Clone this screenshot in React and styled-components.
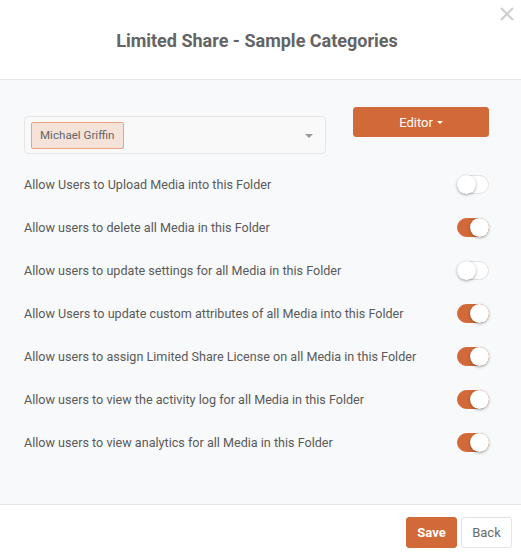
import React from "react";
import styled, { createGlobalStyle } from "styled-components";

const Global = createGlobalStyle`
  html, body { margin: 0; padding: 0; background: #fff; }
  body { font-family: Roboto, "Liberation Sans", Arial, sans-serif; }
  * { box-sizing: border-box; }
`;

const Modal = styled.div`
  width: 521px;
  height: 557px;
  display: flex;
  flex-direction: column;
  background: #fff;
  position: relative;
`;

const Header = styled.div`
  height: 80px;
  border-bottom: 1px solid #e6e6e6;
  display: flex;
  align-items: center;
  justify-content: center;
  padding-right: 7px;
  flex-shrink: 0;
`;

const Title = styled.h2`
  margin: 0;
  padding-top: 2px;
  font-size: 18px;
  font-weight: 700;
  color: #646464;
`;

const Close = styled.button`
  position: absolute;
  top: 5px;
  right: 5px;
  width: 18px;
  height: 18px;
  padding: 0;
  border: 0;
  background: none;
  display: flex;
  align-items: center;
  justify-content: center;
`;

const Body = styled.div`
  flex: 1;
  background: #f8f9fb;
  padding: 27px 32px 0 24px;
  display: flex;
  flex-direction: column;
`;

const TopRow = styled.div`
  display: flex;
  justify-content: space-between;
  align-items: flex-start;
  margin-bottom: 9px;
`;

const Select = styled.div`
  margin-top: 9px;
  width: 302px;
  height: 38px;
  border: 1px solid #e6e6e6;
  border-radius: 4px;
  background: #f9f9f9;
  display: flex;
  align-items: center;
  padding: 0 12px 0 6px;
  justify-content: space-between;
`;

const Tag = styled.span`
  height: 27px;
  display: inline-flex;
  align-items: center;
  padding: 0 8px;
  background: #f5e2d9;
  border: 1px solid #e8a383;
  border-radius: 2px;
  font-size: 11.6px;
  color: #666;
`;

const Caret = styled.span`
  width: 0;
  height: 0;
  border-left: 4px solid transparent;
  border-right: 4px solid transparent;
  border-top: 4px solid #999;
  margin-top: 2px;
`;

const Button = styled.button`
  height: ${(p) => p.$h || 30}px;
  width: ${(p) => p.$w}px;
  border-radius: 3px;
  font-family: inherit;
  font-size: 13px;
  cursor: pointer;
  display: inline-flex;
  align-items: center;
  justify-content: center;
  gap: 4px;
  background: ${(p) => (p.$primary ? "#d26938" : "#fff")};
  color: ${(p) => (p.$primary ? "#fff" : "#6b6b6b")};
  border: 1px solid ${(p) => (p.$primary ? "#d26938" : "#e3e3e3")};
  font-weight: ${(p) => (p.$bold ? 700 : 400)};
`;

const SmallCaret = styled.span`
  width: 0;
  height: 0;
  border-left: 3px solid transparent;
  border-right: 3px solid transparent;
  border-top: 3px solid #fff;
`;

const Row = styled.div`
  height: 43px;
  display: flex;
  align-items: center;
  justify-content: space-between;
  font-size: 12.6px;
  color: #5a5a5a;
`;

const Toggle = styled.span`
  width: 32px;
  height: 19px;
  border-radius: 10px;
  background: ${(p) => (p.$on ? "#d26938" : "#fff")};
  border: 1px solid ${(p) => (p.$on ? "#d26938" : "#e2e2e2")};
  position: relative;
  display: inline-block;
  &::after {
    content: "";
    position: absolute;
    top: -1px;
    left: ${(p) => (p.$on ? "12px" : "-1px")};
    width: 19px;
    height: 19px;
    border-radius: 50%;
    background: #fff;
    box-shadow: 0 1px 3px rgba(0, 0, 0, 0.35);
  }
`;

const Footer = styled.div`
  height: 53px;
  border-top: 1px solid #e3e3e3;
  display: flex;
  justify-content: flex-end;
  align-items: center;
  gap: 4px;
  padding: 2px 9px 0 0;
  flex-shrink: 0;
`;

const rows = [
  ["Allow Users to Upload Media into this Folder", false],
  ["Allow users to delete all Media in this Folder", true],
  ["Allow users to update settings for all Media in this Folder", false],
  ["Allow Users to update custom attributes of all Media into this Folder", true],
  ["Allow users to assign Limited Share License on all Media in this Folder", true],
  ["Allow users to view the activity log for all Media in this Folder", true],
  ["Allow users to view analytics for all Media in this Folder", true],
];

export default function App() {
  return (
    <>
      <Global />
      <Modal>
        <Header>
          <Title>Limited Share - Sample Categories</Title>
        </Header>
        <Close aria-label="close">
          <svg width="16" height="16" viewBox="0 0 16 16">
            <path d="M2 2L14 14M14 2L2 14" stroke="#cfcfcf" strokeWidth="2.2" />
          </svg>
        </Close>
        <Body>
          <TopRow>
            <Select>
              <Tag>Michael Griffin</Tag>
              <Caret />
            </Select>
            <Button $primary $w={136}>
              Editor <SmallCaret />
            </Button>
          </TopRow>
          {rows.map(([label, on]) => (
            <Row key={label}>
              <span>{label}</span>
              <Toggle $on={on} />
            </Row>
          ))}
        </Body>
        <Footer>
          <Button $primary $bold $w={51} $h={31}>
            Save
          </Button>
          <Button $w={51} $h={31}>
            Back
          </Button>
        </Footer>
      </Modal>
    </>
  );
}
